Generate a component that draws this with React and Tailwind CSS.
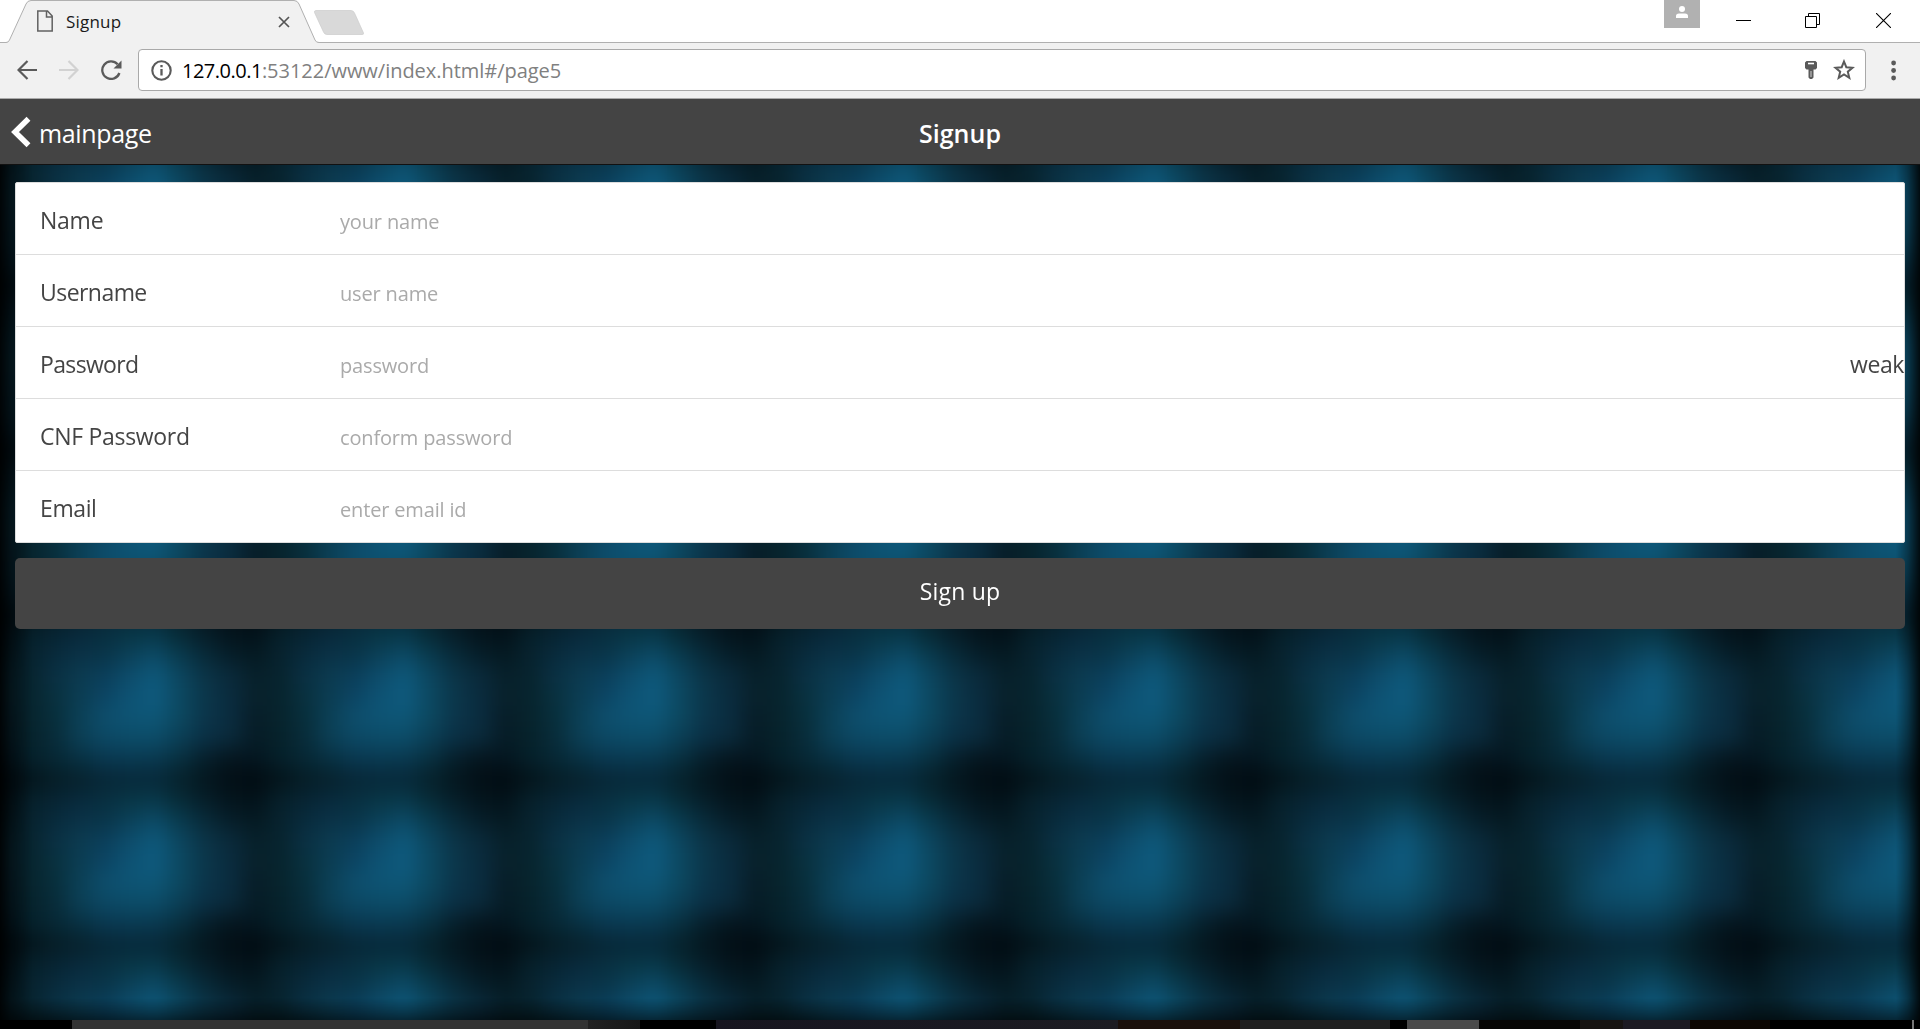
import React from "react";

const TILE_W = 250;
const TILE_H = 165;
const GLOW = [
  ["#020c12", "#04141b", "#051d26", "#06222d", "#072737", "#07293a", "#07293a", "#06222c", "#04171f", "#030f16"],
  ["#03121a", "#06202a", "#072433", "#082a3c", "#082f40", "#083646", "#083849", "#072b37", "#061e29", "#04151d"],
  ["#051a22", "#07222e", "#082b3c", "#0a3247", "#093549", "#0b4159", "#0c4a66", "#093a4d", "#082a39", "#061e29"],
  ["#07202a", "#07242f", "#0a3043", "#0b3b50", "#0b3f5b", "#0d4d6c", "#0d587a", "#0c465f", "#0b3447", "#0a2a3b"],
  ["#08222c", "#07242e", "#09313f", "#0b3d53", "#0c4564", "#0d5374", "#0e5a7e", "#0c4962", "#0b374b", "#0a2b3e"],
  ["#071d28", "#07242d", "#082f3c", "#0b4056", "#0d4e6c", "#0d5474", "#0d5676", "#0c4860", "#0b354a", "#0a2c3f"],
  ["#061c26", "#06222b", "#082c3a", "#0b3f55", "#0c4864", "#0c4c68", "#0c4c68", "#0b3f56", "#0a3045", "#0a2a3b"],
  ["#041620", "#05202a", "#072835", "#083143", "#093850", "#093a52", "#093950", "#083040", "#061f2b", "#05161f"],
];
const COLUMNS = [-1, 0, 1, 2, 3, 4, 5, 6, 7];
const ROWS = [0, 1, 2, 3, 4, 5];

function Backdrop() {
  const cw = TILE_W / 10;
  const ch = TILE_H / 8;
  return (
    <svg className="absolute inset-0 -z-10" width="1920" height="855" viewBox="0 0 1920 855">
      <defs>
        <filter id="soften" filterUnits="userSpaceOnUse" x="-300" y="-200" width="2500" height="1300" colorInterpolationFilters="sRGB">
          <feGaussianBlur stdDeviation="10" />
        </filter>
        <g id="tile">
          {GLOW.map((row, j) =>
            row.map((c, i) => (
              <rect key={`${i}-${j}`} x={(i - 0.5) * cw} y={(j - 0.5) * ch} width={cw + 0.6} height={ch + 0.6} fill={c} />
            ))
          )}
        </g>
        <linearGradient id="fadeLeft">
          <stop offset="0" stopColor="#000" stopOpacity="0.85" />
          <stop offset="0.35" stopColor="#000" stopOpacity="0.4" />
          <stop offset="1" stopColor="#000" stopOpacity="0" />
        </linearGradient>
        <linearGradient id="fadeRight">
          <stop offset="0" stopColor="#000" stopOpacity="0" />
          <stop offset="0.5" stopColor="#000" stopOpacity="0.35" />
          <stop offset="1" stopColor="#000" stopOpacity="0.85" />
        </linearGradient>
        <linearGradient id="fadeBottom" x1="0" x2="0" y1="0" y2="1">
          <stop offset="0" stopColor="#000" stopOpacity="0" />
          <stop offset="1" stopColor="#000" stopOpacity="0.55" />
        </linearGradient>
      </defs>
      <g filter="url(#soften)">
        {ROWS.map((r) => COLUMNS.map((c) => <use key={`${r}-${c}`} href="#tile" x={5 + c * TILE_W} y={-46 + r * TILE_H} />))}
      </g>
      <rect width="32" height="855" fill="url(#fadeLeft)" />
      <rect x="1896" width="24" height="855" fill="url(#fadeRight)" />
      <rect y="833" width="1920" height="22" fill="url(#fadeBottom)" />
    </svg>
  );
}

function TabStrip() {
  return (
    <div className="relative flex h-[43px] shrink-0 border-b border-[#b0b0b0] bg-white">
      <svg className="absolute left-0 top-0" width="380" height="43" viewBox="0 0 380 43">
        <path d="M0 43V42.5H6Q8.5 42.5 9.5 40L26 4Q27.500 0.500 31 0.500H294Q297.500 0.500 299 4L315 40Q316 42.500 319 42.500V43Z" fill="#f1f1f1" />
        <path d="M0 42.500H6Q8.500 42.500 9.500 40L26 4Q27.500 0.500 31 0.500H294Q297.500 0.500 299 4L315 40Q316 42.500 319 42.500" fill="none" stroke="#b0b0b0" />
        <path d="M316 10.500H351Q353.500 10.500 354.500 13L363.500 33Q364 34.500 362 34.500H327Q324.500 34.500 323.500 32L314.500 12.500Q314 10.500 316 10.500Z" fill="#d9d9d9" stroke="#cccccc" strokeWidth="0.700" />
      </svg>
      <div className="relative flex h-full w-[300px] items-center pl-[37px]">
        <svg width="16" height="22" viewBox="0 0 16 22" fill="none" stroke="#616161" strokeWidth="1.500">
          <path d="M0.800 1H10.500L15.200 6V21H0.800ZM9.500 1V7H15.200" />
        </svg>
        <span className="ml-[13px] pt-[2px] text-[17px] leading-[24px] tracking-[0.2px] text-[#1a1a1a]">Signup</span>
        <svg className="ml-auto mr-[10px] mt-px" width="12" height="12" viewBox="0 0 12 12" stroke="#555" strokeWidth="1.700">
          <path d="M1 1L11 11M11 1L1 11" />
        </svg>
      </div>
      <div className="ml-auto flex h-full items-start">
        <div className="flex h-[28px] w-[36px] justify-center bg-[#b1b1b1] pt-[6px]">
          <svg width="12" height="12" viewBox="0 0 12 12" fill="#fff">
            <circle cx="6" cy="3" r="3" />
            <path d="M0 12V10Q0 7.500 3 7.500H9Q12 7.500 12 10V12Z" />
          </svg>
        </div>
        <svg className="ml-[36px] mt-[13px]" width="15" height="15" viewBox="0 0 15 15" stroke="#000">
          <path d="M0 7.500H15" />
        </svg>
        <svg className="ml-[54px] mt-[13px]" width="15" height="15" viewBox="0 0 15 15" stroke="#000" fill="none">
          <path d="M0.500 3.500H11.500V14.500H0.500ZM3.500 3.500V0.500H14.500V11.500H11.500" />
        </svg>
        <svg className="ml-[56px] mr-[29px] mt-[13px]" width="15" height="15" viewBox="0 0 15 15" stroke="#000" strokeWidth="1.100">
          <path d="M0 0L15 15M15 0L0 15" />
        </svg>
      </div>
    </div>
  );
}

function AddressBar() {
  return (
    <div className="flex h-[56px] shrink-0 items-start border-b border-[#aaaaaa] bg-[#f1f1f1] pl-[17px] pt-[6px]">
      <div className="flex h-[42px] w-[121px] items-center">
        <svg width="20" height="20" viewBox="0 0 20 20" fill="none" stroke="#5a5a5a" strokeWidth="2.200">
          <path d="M20 10H1.500M10.500 1L1.500 10L10.500 19" />
        </svg>
        <svg className="ml-[22px]" width="20" height="20" viewBox="0 0 20 20" fill="none" stroke="#d2d2d2" strokeWidth="2.200">
          <path d="M0 10H18.500M9.500 1L18.500 10L9.500 19" />
        </svg>
        <svg className="ml-[22px]" width="21" height="20" viewBox="0 0 21 20" fill="none">
          <path d="M16.600 4.200A8.800 8.800 0 1 0 18.400 13" stroke="#5a5a5a" strokeWidth="2.300" />
          <path d="M20.500 0.500V8.500H12.500Z" fill="#5a5a5a" />
        </svg>
      </div>
      <div className="flex h-[42px] w-[1728px] items-center rounded-[4px] border border-[#a9a9a9] bg-white pl-[12px] pr-[10px]">
        <svg width="21" height="21" viewBox="0 0 21 21" fill="none" stroke="#5a5a5a">
          <circle cx="10.500" cy="10.500" r="9.200" strokeWidth="2.100" />
          <path d="M10.500 9V15.500M10.500 5V7.300" strokeWidth="2.300" />
        </svg>
        <p className="ml-[10px] whitespace-nowrap pt-[2px] text-[20px] leading-[28px] text-[#808080]">
          <span className="tracking-[-0.5px] text-black">127.0.0.1</span>
          <span className="tracking-[-0.03px]">:53122/www/index.html#/page5</span>
        </p>
        <svg className="ml-auto" width="12" height="18" viewBox="0 0 12 18">
          <path d="M1.500 0H10.500L12 1.500V7L10.500 8.500H8.500V16.500L7 18H5L3.500 16.500V8.500H1.500L0 7V1.500Z" fill="#5a5a5a" />
          <path d="M3 2.500H9" stroke="#fff" strokeWidth="1.600" />
          <path d="M6 10V16" stroke="#d0d0d0" />
        </svg>
        <svg className="ml-[16px]" width="22" height="22" viewBox="0 0 22 22" fill="none" stroke="#5a5a5a" strokeWidth="2">
          <path d="M11 2.500L13.300 8.200L19.500 8.700L14.800 12.700L16.300 18.800L11 15.500L5.700 18.800L7.200 12.700L2.500 8.700L8.700 8.200Z" />
        </svg>
      </div>
      <svg className="ml-[25px] mt-[11px]" width="6" height="21" viewBox="0 0 6 21" fill="#5a5a5a">
        <circle cx="2.600" cy="3" r="2.400" />
        <circle cx="2.600" cy="10.500" r="2.400" />
        <circle cx="2.600" cy="18" r="2.400" />
      </svg>
    </div>
  );
}

const FIELDS = [
  { label: "Name", hint: "your name", spacing: "tracking-[-0.25px]" },
  { label: "Username", hint: "user name", spacing: "tracking-[-0.55px]" },
  { label: "Password", hint: "password", spacing: "tracking-[-0.65px]", note: "weak" },
  { label: "CNF Password", hint: "conform password", spacing: "tracking-[-0.3px]" },
  { label: "Email", hint: "enter email id", spacing: "tracking-[-0.4px]" },
];

function Field({ label, hint, spacing, note }) {
  return (
    <label className="flex h-[72px] items-center border-b border-[#dddddd] pl-[24px] last:h-[71px] last:border-b-0">
      <span className={`w-[300px] pt-[3px] text-[23px] leading-[30px] text-[#444444] ${spacing}`}>{label}</span>
      <span className="pt-[6px] text-[20px] leading-[30px] tracking-[-0.16px] text-[#aaaaaa]">{hint}</span>
      {note && <span className="ml-auto pt-[3px] text-[23px] leading-[30px] tracking-[-0.4px] text-[#444444]">{note}</span>}
    </label>
  );
}

function DesktopEdge() {
  return (
    <div className="flex h-[10px] shrink-0 bg-black">
      <div className="w-[72px] bg-black" />
      <div className="w-[516px] bg-[#333333]" />
      <div className="w-[52px] bg-gradient-to-r from-[#222222] to-[#161616]" />
      <div className="w-[76px] bg-black" />
      <div className="w-[402px] bg-gradient-to-r from-[#17151f] to-[#1c1c22]" />
      <div className="w-[122px] bg-[#1a100b]" />
      <div className="w-[150px] bg-[#1f1f1f]" />
      <div className="w-[17px] bg-black" />
      <div className="w-[72px] bg-[#4a4a4a]" />
      <div className="w-[101px] bg-[#060504]" />
      <div className="w-[43px] bg-[#171412]" />
      <div className="w-[67px] bg-[#1c1a22]" />
      <div className="w-[80px] bg-[#0d0703]" />
      <div className="w-[142px] bg-black" />
      <div className="w-[2px] bg-[#777777]" />
    </div>
  );
}

export default function App() {
  return (
    <div className="flex h-[1029px] w-[1920px] flex-col overflow-hidden bg-black font-['Open_Sans','Noto_Sans',sans-serif]">
      <TabStrip />
      <AddressBar />
      <header className="grid h-[66px] shrink-0 grid-cols-3 items-center border-b border-[#111111] bg-[#444444] text-white">
        <div className="flex items-center pl-[11px]">
          <svg width="20" height="32" viewBox="0 0 20 32" fill="none" stroke="#fff" strokeWidth="5.500">
            <path d="M17.500 2.800L4 16L17.500 29.200" />
          </svg>
          <span className="ml-[8px] pt-[3px] text-[25px] leading-[34px] tracking-[-0.35px]">mainpage</span>
        </div>
        <h1 className="pt-[3px] text-center text-[25px] font-semibold leading-[34px]">Signup</h1>
      </header>
      <main className="relative isolate h-[855px] shrink-0 overflow-hidden px-[15px] pt-[17px]">
        <Backdrop />
        <div className="rounded-[2px] border border-[#dddddd] bg-white">
          {FIELDS.map((f) => (
            <Field key={f.label} {...f} />
          ))}
        </div>
        <button className="mt-[15px] flex h-[71px] w-full items-center justify-center rounded-[5px] bg-[#444444] pb-[5px] text-[23px] leading-[30px] tracking-[0.2px] text-white">
          Sign up
        </button>
      </main>
      <DesktopEdge />
    </div>
  );
}
